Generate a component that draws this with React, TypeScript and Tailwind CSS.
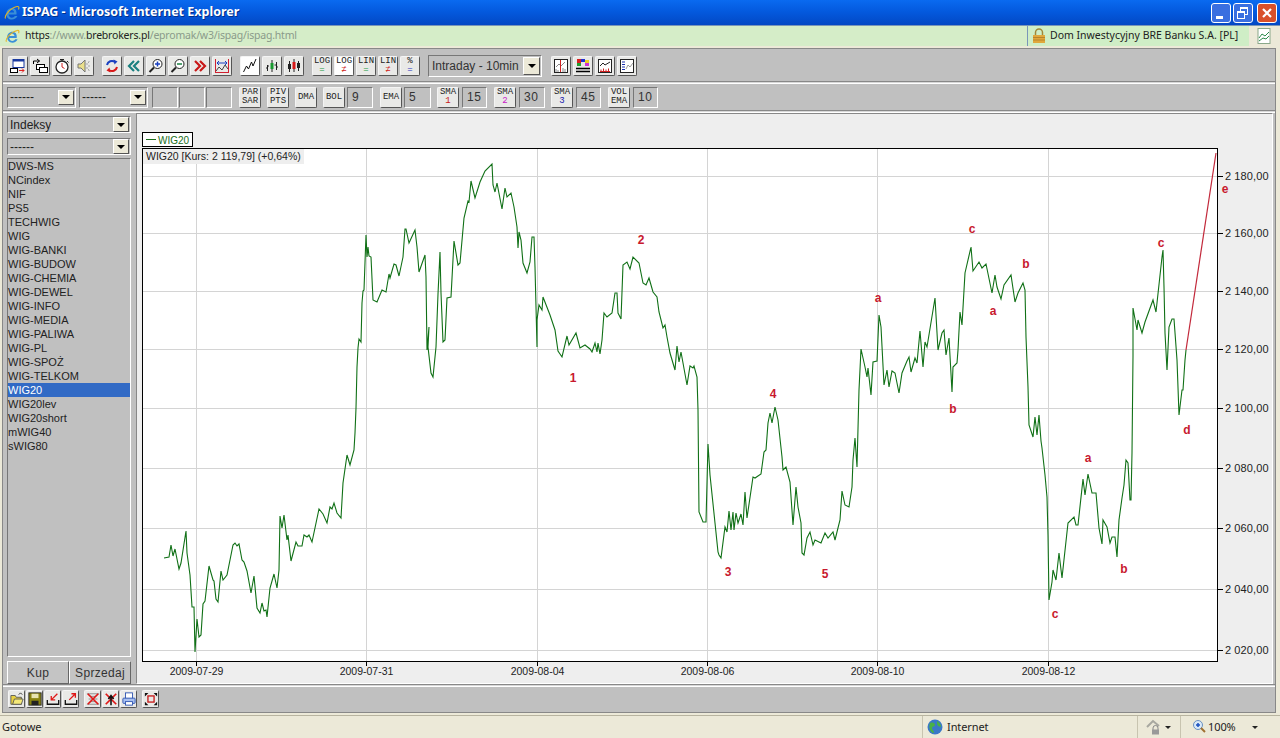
import type { ReactNode } from "react";

const PRICE =
  "164,558 169,557 171,545 173,556 175,549 179,569 181,563 186,531 187,553 190,575 192,607 194,607 195,652 197,619 199,637 201,635 203,604 205,601 209,566 213,580 214,581 216,599 218,602 221,571 223,580 227,575 233,545 235,543 237,546 239,544 242,560 244,562 247,571 251,593 254,576 257,608 260,613 262,603 264,611 266,610 267,617 270,588 274,574 277,588 279,570 280,516 282,528 284,515 287,540 288,535 291,561 296,542 298,546 302,546 304,535 307,537 309,535 312,542 319,509 323,514 327,523 330,507 332,509 334,503 337,513 341,518 343,483 347,455 350,465 354,450 355,433 356,408 357,367 358,348 359,339 361,342 362,303 363,291 364,290 366,235 367,257 368,247 369,256 371,257 373,300 377,302 382,290 386,292 389,274 390,278 394,264 396,265 399,276 403,257 405,229 406,229 409,243 415,230 417,247 419,272 425,255 426,277 427,350 429,327 428,347 431,373 433,377 436,347 438,294 440,252 441,293 443,342 445,340 447,298 451,297 454,241 458,265 460,263 464,218 468,201 469,202 471,181 475,198 480,182 485,171 492,164 493,185 495,192 497,183 502,209 505,188 507,197 511,193 514,207 517,227 518,248 519,232 521,240 523,263 527,273 530,262 532,237 534,237 535,267 537,347 537,320 539,305 542,310 543,297 550,315 555,330 558,351 562,357 567,336 569,345 576,333 580,348 585,345 590,349 592,352 595,343 597,352 598,343 600,354 602,340 604,313 607,317 612,313 615,293 617,293 618,313 621,319 623,265 627,262 630,269 633,257 639,263 643,283 646,285 649,278 653,292 657,297 659,312 663,328 665,325 667,337 670,353 675,370 677,346 679,362 681,352 687,385 690,366 693,368 694,366 697,377 698,410 699,512 703,522 706,522 707,483 708,444 710,475 715,523 718,552 719,555 721,558 725,527 727,532 729,511 731,530 733,512 734,530 736,513 738,523 741,514 743,525 745,492 747,518 753,477 755,478 761,474 764,452 766,450 768,423 770,413 772,423 775,407 778,420 782,457 783,470 786,467 790,482 793,525 796,487 798,507 801,523 802,553 804,555 807,538 810,532 813,545 815,540 821,543 825,533 828,538 833,532 835,540 840,520 842,491 845,505 849,507 852,487 853,460 855,438 857,467 859,390 861,349 865,367 867,377 868,368 871,395 873,362 877,361 879,315 881,327 884,385 887,370 889,387 892,371 895,373 899,393 902,373 907,361 909,357 911,372 915,358 917,363 920,331 923,367 925,342 927,347 935,298 938,350 942,333 944,330 946,355 949,338 952,392 953,367 957,363 958,350 960,312 962,325 965,273 971,247 973,271 979,262 982,268 986,264 992,293 995,275 997,287 1001,299 1004,285 1011,275 1015,302 1018,293 1023,283 1025,290 1026,337 1028,387 1029,425 1033,437 1035,417 1037,435 1039,415 1041,441 1042,448 1045,475 1047,497 1048,535 1049,600 1052,582 1053,570 1056,580 1059,553 1062,578 1068,523 1074,517 1076,525 1078,525 1083,479 1085,495 1088,474 1092,493 1096,493 1099,528 1102,544 1103,520 1107,527 1110,543 1112,537 1115,537 1117,557 1119,520 1122,498 1124,485 1126,460 1128,463 1130,500 1131,500 1132,453 1133,356 1133,308 1137,330 1138,320 1142,333 1145,322 1153,300 1156,312 1162,257 1163,250 1164,287 1165,333 1167,370 1169,327 1172,319 1174,319 1177,360 1179,415 1182,390 1183,390 1185,360 1186,350";

const GRID_Y = [176, 233, 291, 349, 408, 468, 528, 589, 650];
const GRID_X = [196, 366, 537, 707, 877, 1048];
const Y_LABELS = ["2 180,00", "2 160,00", "2 140,00", "2 120,00", "2 100,00", "2 080,00", "2 060,00", "2 040,00", "2 020,00"];
const X_LABELS = ["2009-07-29", "2009-07-31", "2009-08-04", "2009-08-06", "2009-08-10", "2009-08-12"];
const MARKS: [string, number, number][] = [
  ["1", 573, 382], ["2", 641, 244], ["3", 728, 576], ["4", 773, 398], ["5", 825, 578],
  ["a", 878, 302], ["b", 953, 413], ["c", 972, 233], ["a", 993, 315], ["b", 1026, 268],
  ["a", 1088, 462], ["c", 1055, 618], ["b", 1124, 573], ["c", 1161, 247], ["d", 1187, 434], ["e", 1225, 193],
];
const INSTRUMENTS = [
  "DWS-MS", "NCindex", "NIF", "PS5", "TECHWIG", "WIG", "WIG-BANKI", "WIG-BUDOW", "WIG-CHEMIA", "WIG-DEWEL", "WIG-INFO",
  "WIG-MEDIA", "WIG-PALIWA", "WIG-PL", "WIG-SPOŻ", "WIG-TELKOM", "WIG20", "WIG20lev", "WIG20short", "mWIG40", "sWIG80",
];

function Btn({ children, active, className = "w-5 h-5" }: { children: ReactNode; active?: boolean; className?: string }) {
  return (
    <div
      className={`${className} shrink-0 flex flex-col items-center justify-center rounded-[2px] border border-t-[#f4f4f4] border-l-[#f4f4f4] border-b-[#555] border-r-[#555] ${
        active ? "bg-white" : "bg-[#e9e9e7]"
      }`}
    >
      {children}
    </div>
  );
}

function Ico({ children }: { children: ReactNode }) {
  return (
    <svg width="16" height="16" viewBox="0 0 16 16" fill="none">
      {children}
    </svg>
  );
}

function TxtBtn({ top, bottom, color, active, className = "w-[22px] h-[21px]" }: { top: string; bottom?: string; color?: string; active?: boolean; className?: string }) {
  return (
    <Btn className={className} active={active}>
      <span className="font-['Liberation_Mono',monospace] text-[9px] leading-[9px] text-[#222]">{top}</span>
      {bottom && (
        <span className="font-['Liberation_Mono',monospace] text-[9px] leading-[9px]" style={{ color: color ?? "#222" }}>
          {bottom}
        </span>
      )}
    </Btn>
  );
}

function NumBox({ value, className = "w-[26px]" }: { value?: string; className?: string }) {
  return (
    <div className={`${className} h-[21px] shrink-0 border border-t-[#777] border-l-[#777] border-b-white border-r-white bg-[#c0c0c0] pl-1 text-[12px] leading-[19px] tracking-[0.5px] text-[#333]`}>
      {value}
    </div>
  );
}

function Arrow() {
  return <div className="h-0 w-0 border-x-[4px] border-t-[4px] border-x-transparent border-t-black" />;
}

function Combo({ label, className }: { label: string; className: string }) {
  return (
    <div className={`${className} flex shrink-0 items-center justify-between border border-t-[#777] border-l-[#777] border-b-white border-r-white bg-[#c0c0c0] pl-[2px] pr-[1px] text-[12px] text-[#222]`}>
      <span className="truncate">{label}</span>
      <div className="flex h-[15px] w-[16px] items-center justify-center border border-t-white border-l-white border-b-[#555] border-r-[#555] bg-[#ece9d8]">
        <Arrow />
      </div>
    </div>
  );
}

function IeLogo({ size }: { size: number }) {
  return (
    <svg width={size} height={size} viewBox="0 0 16 16" fill="none">
      <path d="M12.5 9.5H4.6c.2 2 1.5 3.2 3.2 3.2 1.3 0 2.3-.6 3-1.7h2.6c-.9 2.2-3 3.6-5.5 3.6-3.3 0-5.6-2.4-5.6-5.7C2.3 5.500 4.700 3 8 3c3 0 5 2.300 4.500 6.500zM4.700 7.500h5.400C10 6 9.100 5 7.600 5 6.100 5 5 6 4.700 7.500z" fill="#3a8fd8" />
      <path d="M1.500 13.500C0 11 6 3 13 1.500c2-.4 2.200 1 1.500 3" stroke="#e6b422" strokeWidth="1.100" />
    </svg>
  );
}

function Chart() {
  return (
    <svg className="block h-full w-full" viewBox="137 114 1135 569" fontFamily="'Liberation Sans', Arial, sans-serif" fontSize="11">
      <rect x="142.500" y="132.500" width="50" height="14" fill="#fff" stroke="#000" />
      <line x1="146" y1="139.500" x2="156" y2="139.500" stroke="#1a6e1a" />
      <text x="158" y="143.500" fill="#1a6e1a" fontSize="10">WIG20</text>

      <rect x="143" y="149" width="1074" height="512" fill="#fff" />
      {GRID_Y.map((y) => (
        <line key={y} x1="143" x2="1217" y1={y + 0.5} y2={y + 0.5} stroke="#d4d4d4" />
      ))}
      {GRID_X.map((x) => (
        <line key={x} x1={x + 0.5} x2={x + 0.5} y1="149" y2="661" stroke="#d4d4d4" />
      ))}
      <rect x="143" y="149" width="161" height="15" fill="#eeeeee" />
      <text x="146" y="160" fill="#222" fontSize="10.500">WIG20 [Kurs: 2 119,79] (+0,64%)</text>

      <polyline points={PRICE} fill="none" stroke="#107016" strokeWidth="1.100" />
      <polyline points="1186,350 1216,153" fill="none" stroke="#c2283a" strokeWidth="1.200" />

      {MARKS.map(([t, x, y]) => (
        <text key={`${t}${x}`} x={x} y={y} textAnchor="middle" fill="#c8192e" fontWeight="700" fontSize="12">
          {t}
        </text>
      ))}

      <rect x="142.500" y="148.500" width="1075" height="513" fill="none" stroke="#000" />

      {GRID_Y.map((y, i) => (
        <g key={y}>
          <line x1="1217" x2="1223" y1={y + 0.5} y2={y + 0.5} stroke="#000" />
          <text x="1225" y={y + 4} fill="#222" letterSpacing="0.1">{Y_LABELS[i]}</text>
        </g>
      ))}
      {GRID_X.map((x, i) => (
        <g key={x}>
          <line x1={x + 0.5} x2={x + 0.5} y1="661" y2="666" stroke="#000" />
          <text x={x + 0.5} y="675" textAnchor="middle" fill="#222" fontSize="10.500">{X_LABELS[i]}</text>
        </g>
      ))}
    </svg>
  );
}

function Sep() {
  return <div className="h-[3px] shrink-0 border-y border-t-[#888] border-b-white bg-[#d8d8d8]" />;
}

export default function App() {
  return (
    <div className="flex h-[738px] w-[1280px] flex-col overflow-hidden bg-[#ece9d8] font-['Liberation_Sans',Arial,sans-serif]">
      {/* Title bar */}
      <div className="flex h-[25px] shrink-0 items-center bg-gradient-to-b from-[#0a6af0] via-[#0458dc] to-[#0348c4] pl-[4px] pr-[3px]">
        <IeLogo size={16} />
        <span className="ml-[2px] font-['Noto_Sans',sans-serif] text-[12.5px] font-bold text-white [text-shadow:1px_1px_0_#02308a]">
          ISPAG - Microsoft Internet Explorer
        </span>
        <div className="ml-auto flex gap-[2px]">
          <div className="flex h-5 w-5 items-end rounded-[3px] border border-white bg-[#3a6fe0] pb-[3px] pl-[4px]">
            <div className="h-[3px] w-[7px] bg-white" />
          </div>
          <div className="relative h-5 w-5 rounded-[3px] border border-white bg-[#3a6fe0]">
            <div className="absolute left-[6px] top-[3px] h-[8px] w-[8px] border border-t-2 border-white" />
            <div className="absolute left-[3px] top-[7px] h-[8px] w-[8px] border border-t-2 border-white bg-[#3a6fe0]" />
          </div>
          <div className="ml-[2px] flex h-5 w-5 items-center justify-center rounded-[3px] border border-white bg-[#d9502a]">
            <svg width="12" height="12" viewBox="0 0 12 12">
              <path d="M2 2l8 8M10 2l-8 8" stroke="#fff" strokeWidth="2.200" />
            </svg>
          </div>
        </div>
      </div>

      {/* Address bar */}
      <div className="flex h-[21px] shrink-0 items-center border-t border-[#7a96b8] bg-[#d5edc8] pl-[5px] font-['Noto_Sans',sans-serif] text-[10.5px]">
        <IeLogo size={15} />
        <span className="ml-[5px] tracking-[-0.2px] text-[#8a9a8a]">
          <span className="text-[#222]">https</span>://www.<span className="text-[#222]">brebrokers.pl</span>/epromak/w3/ispag/ispag.html
        </span>
        <div className="ml-auto flex h-full w-[222px] items-center border-l border-[#7a96b8] bg-[#cfeec6] pl-[4px] text-[#222]">
          <svg width="14" height="16" viewBox="0 0 14 16" fill="none">
            <path d="M3.500 7V4.500a3.500 3.500 0 017 0V7" stroke="#a08838" strokeWidth="1.500" />
            <rect x="1" y="7" width="12" height="8" fill="#e0a83c" />
            <path d="M1 9.500h12M1 12h12" stroke="#b8842a" />
          </svg>
          <span className="ml-[4px]">Dom Inwestycyjny BRE Banku S.A. [PL]</span>
        </div>
        <div className="flex h-full w-[31px] items-center justify-center bg-[#ece9d8]">
          <svg width="17" height="18" viewBox="0 0 17 18" fill="none">
            <rect x="2" y="1.500" width="12" height="15" fill="#fff" stroke="#8aa88a" />
            <path d="M3 11l3-4 3 2 4-4M3 14l4-3 3 1 3-3" stroke="#2a8a4a" />
          </svg>
        </div>
      </div>

      {/* Applet */}
      <div className="ml-[2px] mr-[4px] mt-[2px] flex h-[665px] shrink-0 flex-col border border-[#888] bg-[#c0c0c0]">
        {/* First toolbar */}
        <div className="flex h-[32px] shrink-0 items-center pl-[5px] pt-[1px]">
          <div className="flex gap-[2px]">
            <Btn>
              <Ico>
                <rect x="3" y="1.500" width="11" height="8" fill="#fff" stroke="#1a3aa0" />
                <rect x="3" y="1.500" width="11" height="2" fill="#1a3aa0" />
                <rect x="0.500" y="10.500" width="7" height="4" fill="#fff" stroke="#000" />
                <path d="M9 12.500h5M12 10.500l2 2-2 2" stroke="#e02020" />
              </Ico>
            </Btn>
            <Btn>
              <Ico>
                <rect x="4.500" y="6.500" width="8" height="5" fill="#fff" stroke="#000" />
                <rect x="7.500" y="9.500" width="8" height="5" fill="#fff" stroke="#000" />
                <path d="M1.500 6V3h6M5 1L7.500 3 5 5" stroke="#000" />
              </Ico>
            </Btn>
            <Btn>
              <Ico>
                <circle cx="8" cy="9" r="6" fill="#fff" stroke="#222" strokeWidth="1.300" />
                <path d="M6 1.500h4M8 2v1.500M13 3l1.500 1.500" stroke="#222" />
                <path d="M8 9V5M8 9l2.500 1.500" stroke="#d02020" />
              </Ico>
            </Btn>
            <Btn>
              <Ico>
                <path d="M2 6h3l4-4v12l-4-4H2z" fill="#eadf8c" stroke="#777" />
                <path d="M11 5.500v1M12.500 8h1M11 10.500v-1M13 3.500l-.5 1M13 12.500l-.5-1" stroke="#666" />
              </Ico>
            </Btn>
          </div>
          <div className="ml-2 flex gap-[2px]">
            <Btn>
              <Ico>
                <path d="M3 7a5 5 0 018-3" stroke="#1a40c0" strokeWidth="2" />
                <path d="M9.500 1.500l4 2-3 3z" fill="#1a40c0" />
                <path d="M13 9a5 5 0 01-8 3" stroke="#d81818" strokeWidth="2" />
                <path d="M6.500 14.500l-4-2 3-3z" fill="#d81818" />
              </Ico>
            </Btn>
            <Btn>
              <Ico>
                <path d="M8 3L3 8l5 5M13 3L8 8l5 5" stroke="#1a8080" strokeWidth="2.200" />
              </Ico>
            </Btn>
            <Btn>
              <Ico>
                <circle cx="9.500" cy="6" r="4.500" fill="#fff" stroke="#222" />
                <path d="M7 6h5M9.500 3.500v5" stroke="#1a40c0" strokeWidth="1.500" />
                <path d="M6 9.500L1.500 14" stroke="#222" strokeWidth="2" />
              </Ico>
            </Btn>
            <Btn>
              <Ico>
                <circle cx="9.500" cy="6" r="4.500" fill="#fff" stroke="#222" />
                <path d="M7 6h5" stroke="#1a8040" strokeWidth="1.500" />
                <path d="M6 9.500L1.500 14" stroke="#222" strokeWidth="2" />
              </Ico>
            </Btn>
            <Btn>
              <Ico>
                <path d="M3 3l5 5-5 5M8 3l5 5-5 5" stroke="#c81818" strokeWidth="2.200" />
              </Ico>
            </Btn>
            <Btn>
              <Ico>
                <path d="M1.500 1v14M14.500 1v14M1.500 14.500h13" stroke="#d02030" />
                <path d="M3 5h10M3 5l2-2M3 5l2 2M13 5l-2-2M13 5l-2 2" stroke="#1a40c0" />
                <path d="M2 13l3-4 3 3 3-5 3 4" stroke="#444" />
              </Ico>
            </Btn>
          </div>
          <div className="ml-2 flex gap-[2px]">
            <Btn active>
              <Ico>
                <path d="M1.500 14l3-6 2 3 3-7 1.500 4 3-7" stroke="#111" />
              </Ico>
            </Btn>
            <Btn>
              <Ico>
                <path d="M3.500 7v6M8 2v12M12.500 4v8" stroke="#222" />
                <path d="M8 5v6" stroke="#1a9a30" strokeWidth="3" />
                <path d="M2 10h1.500M3.500 8H5M10.500 7h2M12.500 9h1.500" stroke="#222" />
              </Ico>
            </Btn>
            <Btn>
              <Ico>
                <path d="M3.500 3v11M8 1v13M12.500 3v10" stroke="#222" />
                <rect x="2" y="6" width="3" height="5" fill="#222" />
                <rect x="6.500" y="4" width="3" height="7" fill="#d81818" />
                <rect x="11" y="5" width="3" height="5" fill="#222" />
              </Ico>
            </Btn>
          </div>
          <div className="ml-2 flex gap-[2px]">
            <TxtBtn className="h-5 w-5" top="LOG" bottom="=" color="#149a40" />
            <TxtBtn className="h-5 w-5" top="LOG" bottom="≠" color="#d01818" active />
            <TxtBtn className="h-5 w-5" top="LIN" bottom="=" color="#149a40" />
            <TxtBtn className="h-5 w-5" top="LIN" bottom="≠" color="#d01818" />
            <TxtBtn className="h-5 w-5" top="%" bottom="=" color="#1a30c0" />
          </div>
          <div className="ml-2 flex h-[22px] w-[114px] items-center justify-between whitespace-nowrap border border-t-[#777] border-l-[#777] border-b-white border-r-white bg-[#c0c0c0] pl-[3px] pr-[1px] text-[12px] text-[#333]">
            <span>Intraday - 10min</span>
            <div className="flex h-[18px] w-[17px] items-center justify-center border border-t-white border-l-white border-b-[#555] border-r-[#555] bg-[#ece9d8]">
              <Arrow />
            </div>
          </div>
          <div className="ml-[9px] flex gap-[2px]">
            <Btn>
              <Ico>
                <rect x="1.500" y="1.500" width="13" height="13" fill="#fff" stroke="#222" />
                <path d="M3 9l3-3 2 2 4-4" stroke="#888" />
                <path d="M7.500 2v12" stroke="#d02020" />
                <path d="M3 14v-3M5 14v-2M10 14v-4M12 14v-3" stroke="#888" />
              </Ico>
            </Btn>
            <Btn>
              <Ico>
                <rect x="2" y="1" width="4" height="4" fill="#d82020" />
                <rect x="6" y="1" width="4" height="3" fill="#2030d0" />
                <rect x="10" y="2" width="4" height="3" fill="#e8d020" />
                <rect x="2" y="5" width="4" height="3" fill="#20a030" />
                <rect x="10" y="5" width="4" height="3" fill="#d030d0" />
                <path d="M1 10.500h14M1 13.500h14" stroke="#000" strokeWidth="1.500" />
              </Ico>
            </Btn>
            <Btn>
              <Ico>
                <rect x="1.500" y="1.500" width="13" height="13" fill="#fff" stroke="#222" />
                <path d="M3 8l3-3 2 2 5-3" stroke="#222" />
                <path d="M3 13.500h10M4 13.500v-2M6.500 13.500v-3M9 13.500v-2M11.500 13.500v-3" stroke="#d02020" />
              </Ico>
            </Btn>
            <Btn>
              <Ico>
                <rect x="1.500" y="1.500" width="13" height="13" fill="#fff" stroke="#222" />
                <path d="M3 4h3M3 6.500h3M3 9h3M3 11.500h3" stroke="#1a30b0" />
                <path d="M7 11l2-4 2 2 3-4" stroke="#999" />
              </Ico>
            </Btn>
          </div>
        </div>
        <Sep />

        {/* Second toolbar */}
        <div className="flex h-[26px] shrink-0 items-center pl-[4px]">
          <Combo label="------" className="h-[21px] w-[69px]" />
          <Combo label="------" className="ml-[3px] h-[21px] w-[69px]" />
          <NumBox className="ml-[4px] w-[26px]" />
          <NumBox className="ml-[1px] w-[26px]" />
          <NumBox className="ml-[1px] w-[26px]" />
          <div className="ml-[7px]"><TxtBtn top="PAR" bottom="SAR" /></div>
          <div className="ml-[6px]"><TxtBtn top="PIV" bottom="PTS" /></div>
          <div className="ml-[6px]"><TxtBtn top="DMA" /></div>
          <div className="ml-[6px]"><TxtBtn top="BOL" /></div>
          <NumBox value="9" className="ml-[2px] w-[26px]" />
          <div className="ml-[7px]"><TxtBtn top="EMA" /></div>
          <NumBox value="5" className="ml-[2px] w-[27px]" />
          <div className="ml-[6px]"><TxtBtn top="SMA" bottom="1" color="#c81818" /></div>
          <NumBox value="15" className="ml-[3px] w-[25px]" />
          <div className="ml-[7px]"><TxtBtn top="SMA" bottom="2" color="#c818c8" /></div>
          <NumBox value="30" className="ml-[3px] w-[26px]" />
          <div className="ml-[6px]"><TxtBtn top="SMA" bottom="3" color="#1a20b0" /></div>
          <NumBox value="45" className="ml-[3px] w-[25px]" />
          <div className="ml-[7px]"><TxtBtn top="VOL" bottom="EMA" /></div>
          <NumBox value="10" className="ml-[3px] w-[25px]" />
        </div>
        <Sep />

        {/* Main */}
        <div className="flex h-[571px] shrink-0">
          <div className="flex w-[130px] shrink-0 flex-col pl-[4px] pt-[3px]">
            <Combo label="Indeksy" className="h-[17px] w-[124px]" />
            <Combo label="------" className="mt-[5px] h-[17px] w-[124px]" />
            <div className="mt-[3px] h-[499px] w-[124px] border border-t-[#777] border-l-[#777] border-b-white border-r-white bg-[#c0c0c0] text-[11px] leading-[14px] text-[#222]">
              {INSTRUMENTS.map((name) => (
                <div key={name} className={name === "WIG20" ? "h-[14px] bg-[#316ac5] text-white" : "h-[14px]"}>
                  {name}
                </div>
              ))}
            </div>
            <div className="mt-[4px] flex h-[23px] w-[124px] text-[12px] tracking-[0.3px] text-[#333]">
              <div className="flex w-[62px] items-center justify-center border border-t-white border-l-white border-b-[#666] border-r-[#666] bg-[#c4c4c4]">Kup</div>
              <div className="flex w-[62px] items-center justify-center border border-t-white border-l-white border-b-[#666] border-r-[#666] bg-[#c4c4c4]">Sprzedaj</div>
            </div>
          </div>
          <div className="ml-[3px] flex w-[1137px] shrink-0 border border-t-[#888] border-l-[#888] border-b-white border-r-white bg-[#eeeeee]">
            <Chart />
          </div>
        </div>
        <Sep />

        {/* Bottom toolbar */}
        <div className="flex h-[24px] shrink-0 items-center pl-[5px]">
          <div className="flex gap-[1px]">
            <Btn className="h-[18px] w-[17px]">
              <svg width="14" height="14" viewBox="0 0 16 16" fill="none">
                <path d="M1 4h5l1 2h6v8H1z" fill="#e8d040" stroke="#555" />
                <path d="M3 14l2-6h10l-2 6z" fill="#f4e878" stroke="#555" />
                <path d="M10 3l2-2 2 2" stroke="#222" />
              </svg>
            </Btn>
            <Btn className="h-[18px] w-[17px]">
              <svg width="14" height="14" viewBox="0 0 16 16">
                <rect x="1" y="1" width="14" height="14" fill="#8a8410" stroke="#222" />
                <rect x="4" y="2" width="8" height="5" fill="#e8e4b0" />
                <rect x="4" y="10" width="8" height="5" fill="#222" />
              </svg>
            </Btn>
            <Btn className="h-[18px] w-[17px]">
              <svg width="14" height="14" viewBox="0 0 16 16" fill="none">
                <path d="M1.500 9v5h13V9" stroke="#111" strokeWidth="1.500" />
                <path d="M13 2L6 9M6 4.500V9h4.500" stroke="#e01818" strokeWidth="1.500" />
              </svg>
            </Btn>
            <Btn className="h-[18px] w-[17px]">
              <svg width="14" height="14" viewBox="0 0 16 16" fill="none">
                <path d="M1.500 9v5h13V9" stroke="#111" strokeWidth="1.500" />
                <path d="M6 9l7-7M8.500 2H13v4.500" stroke="#e01818" strokeWidth="1.500" />
              </svg>
            </Btn>
          </div>
          <div className="ml-[5px] flex gap-[1px]">
            <Btn className="h-[18px] w-[17px]">
              <svg width="14" height="14" viewBox="0 0 16 16" fill="none">
                <path d="M1 2h14M1 14h14M5 5h6M5 11h6M3 8h10" stroke="#888" />
                <path d="M2 2l12 12M14 2L2 14" stroke="#e01818" strokeWidth="2" />
              </svg>
            </Btn>
            <Btn className="h-[18px] w-[17px]">
              <svg width="14" height="14" viewBox="0 0 16 16" fill="none">
                <path d="M2 2l12 12M14 2L2 14" stroke="#e01818" strokeWidth="2" />
                <path d="M8 4v11M5 8l3-4 3 4" stroke="#111" strokeWidth="1.800" />
              </svg>
            </Btn>
            <Btn className="h-[18px] w-[17px]">
              <svg width="14" height="14" viewBox="0 0 16 16">
                <rect x="4" y="1" width="8" height="7" fill="#fff" stroke="#2a50b0" />
                <rect x="1" y="7" width="14" height="6" rx="1" fill="#a8c0f0" stroke="#2a50b0" />
                <rect x="4" y="11" width="8" height="4" fill="#fff" stroke="#2a50b0" />
              </svg>
            </Btn>
          </div>
          <div className="ml-[5px]">
            <Btn className="h-[18px] w-[17px]">
              <svg width="14" height="14" viewBox="0 0 16 16" fill="none">
                <rect x="4.500" y="4.500" width="7" height="7" stroke="#c81818" strokeWidth="1.500" />
                <path d="M1 1h4L1 5zM15 1v4l-4-4zM1 15v-4l4 4zM15 15h-4l4-4z" fill="#111" />
              </svg>
            </Btn>
          </div>
        </div>
      </div>

      {/* Status bar */}
      <div className="mt-[2px] flex h-[23px] shrink-0 items-center border-t border-[#b8b4a0] bg-[#ece9d8] font-['Noto_Sans',sans-serif] text-[11px] tracking-[-0.1px] text-[#222]">
        <span className="ml-[2px]">Gotowe</span>
        <div className="ml-auto flex h-full">
          <div className="flex w-[215px] items-center border-l border-[#c8c4b0] pl-[4px]">
            <svg width="16" height="16" viewBox="0 0 16 16">
              <circle cx="8" cy="8" r="7.500" fill="#3a78c8" />
              <path d="M3 4c3-1 5 0 5 2s-3 1-3 3 2 2 2 5c-3 0-6-5-4-10zM10 2c2 1 4 3 4 6l-3-1-1-2z" fill="#48b048" />
            </svg>
            <span className="ml-[4px]">Internet</span>
          </div>
          <div className="flex w-[43px] items-center border-l border-[#c8c4b0] pl-[8px]">
            <svg width="16" height="16" viewBox="0 0 16 16" fill="none">
              <path d="M1 8l6-6 6 5" stroke="#a8a8a0" strokeWidth="2" />
              <path d="M7 11V9a2.500 2.500 0 015 0v2" stroke="#888" />
              <rect x="6" y="10.500" width="7" height="5" fill="#999" />
            </svg>
            <span className="ml-[3px] h-0 w-0 border-x-[3px] border-t-[3px] border-x-transparent border-t-[#222]" />
          </div>
          <div className="flex w-[100px] items-center border-l border-[#c8c4b0] pl-[12px]">
            <svg width="13" height="14" viewBox="0 0 13 14" fill="none">
              <circle cx="5" cy="5" r="4.500" fill="#d8e8f8" stroke="#6a90c0" />
              <path d="M3 5h4M5 3v4" stroke="#1a50c0" strokeWidth="1.500" />
              <path d="M8 8l4 4" stroke="#a07030" strokeWidth="2" />
            </svg>
            <span className="ml-[2px]">100%</span>
            <span className="ml-[16px] h-0 w-0 border-x-[3px] border-t-[3px] border-x-transparent border-t-[#222]" />
          </div>
        </div>
      </div>
    </div>
  );
}
